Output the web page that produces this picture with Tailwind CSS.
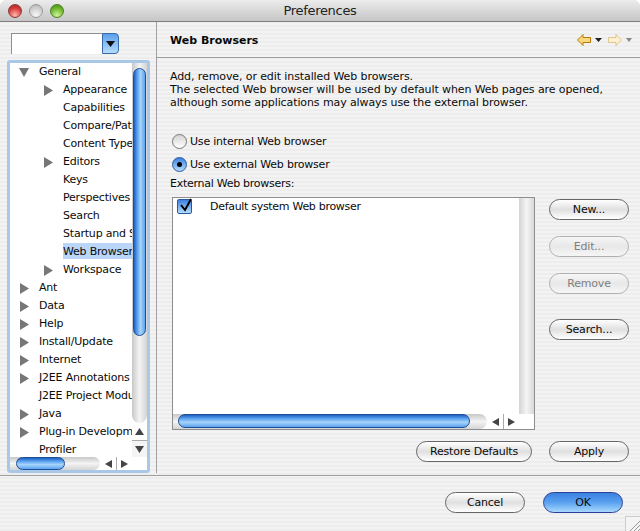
<!DOCTYPE html>
<html><head><meta charset="utf-8"><script src="https://cdn.jsdelivr.net/npm/@tailwindcss/browser@4"></script></head>
<body class="m-0 bg-white">
<div class="w-[640px] h-[531px] overflow-hidden flex flex-col text-[11px] leading-[18px] tracking-[-0.2px] text-[#0a0a0a] font-['DejaVu_Sans',sans-serif] rounded-t-[6px] bg-[repeating-linear-gradient(0deg,#ededed_0,#ededed_2px,#f3f3f3_2px,#f3f3f3_4px)]">
  <!-- title bar -->
  <div class="h-[22px] shrink-0 relative flex items-center justify-center border-b border-[#7f7f7f] bg-gradient-to-b from-[#ececec] to-[#c6c6c6] text-[13px] tracking-[-0.3px] text-[#222]">
    <div class="absolute left-[8px] top-[4px] flex gap-[7px]">
      <span class="w-[14px] h-[14px] rounded-full border border-[#8a3a3a] bg-[radial-gradient(circle_at_50%_85%,#ffb8b0,#d83a3a_60%,#a52020)]"></span>
      <span class="w-[14px] h-[14px] rounded-full border border-[#9a9a9a] bg-[radial-gradient(circle_at_50%_85%,#f8f8f8,#c8c8c8_70%,#aaa)]"></span>
      <span class="w-[14px] h-[14px] rounded-full border border-[#4f7f2a] bg-[radial-gradient(circle_at_50%_85%,#d0f498,#6db52a_60%,#3f8a15)]"></span>
    </div>
    Preferences
  </div>
  <!-- main -->
  <div class="flex flex-1 min-h-0">
    <!-- left pane -->
    <div class="w-[157px] shrink-0 border-r border-[#a0a0a0] flex flex-col mb-[2px]">
      <div class="h-[38px] shrink-0 flex items-start pl-[11px] pt-[11px]">
        <div class="w-[108px] h-[21px] flex">
          <div class="flex-1 bg-white border-t border-l border-[#8e8e8e]"></div>
          <div class="w-[17px] rounded-r-[4px] border border-[#3b6aa8] bg-gradient-to-b from-[#5b9fea] to-[#b5dcfb] flex items-center justify-center">
            <svg width="9" height="6"><path d="M0 0H9L4.500 6Z" fill="#111"/></svg>
          </div>
        </div>
      </div>
      <div class="w-[143px] h-[413px] ml-[7px] relative bg-white border-[3px] border-[#a9c8e8] rounded-[3px] overflow-hidden">
        <div class="absolute inset-0 overflow-hidden whitespace-nowrap">
          <div class="h-[18px] flex items-center"><svg class="ml-[9px] shrink-0" width="10" height="9"><path d="M0 0H10L5 9Z" fill="#777"/></svg><span class="ml-[10px]">General</span></div>
          <div class="h-[18px] flex items-center"><svg class="ml-[34px] shrink-0" width="9" height="11"><path d="M0 0V11L9 5.500Z" fill="#777"/></svg><span class="ml-[10px]">Appearance</span></div>
          <div class="h-[18px] pl-[53px]">Capabilities</div>
          <div class="h-[18px] pl-[53px]">Compare/Patch</div>
          <div class="h-[18px] pl-[53px]">Content Types</div>
          <div class="h-[18px] flex items-center"><svg class="ml-[34px] shrink-0" width="9" height="11"><path d="M0 0V11L9 5.500Z" fill="#777"/></svg><span class="ml-[10px]">Editors</span></div>
          <div class="h-[18px] pl-[53px]">Keys</div>
          <div class="h-[18px] pl-[53px]">Perspectives</div>
          <div class="h-[18px] pl-[53px]">Search</div>
          <div class="h-[18px] pl-[53px]">Startup and Shutdown</div>
          <div class="h-[18px] pl-[53px]"><span class="block w-[70px] h-[16px] leading-[18px] bg-[#b9d5f8]">Web Browser</span></div>
          <div class="h-[18px] flex items-center"><svg class="ml-[34px] shrink-0" width="9" height="11"><path d="M0 0V11L9 5.500Z" fill="#777"/></svg><span class="ml-[10px]">Workspace</span></div>
          <div class="h-[18px] flex items-center"><svg class="ml-[10px] shrink-0" width="9" height="11"><path d="M0 0V11L9 5.500Z" fill="#777"/></svg><span class="ml-[10px]">Ant</span></div>
          <div class="h-[18px] flex items-center"><svg class="ml-[10px] shrink-0" width="9" height="11"><path d="M0 0V11L9 5.500Z" fill="#777"/></svg><span class="ml-[10px]">Data</span></div>
          <div class="h-[18px] flex items-center"><svg class="ml-[10px] shrink-0" width="9" height="11"><path d="M0 0V11L9 5.500Z" fill="#777"/></svg><span class="ml-[10px]">Help</span></div>
          <div class="h-[18px] flex items-center"><svg class="ml-[10px] shrink-0" width="9" height="11"><path d="M0 0V11L9 5.500Z" fill="#777"/></svg><span class="ml-[10px]">Install/Update</span></div>
          <div class="h-[18px] flex items-center"><svg class="ml-[10px] shrink-0" width="9" height="11"><path d="M0 0V11L9 5.500Z" fill="#777"/></svg><span class="ml-[10px]">Internet</span></div>
          <div class="h-[18px] flex items-center"><svg class="ml-[10px] shrink-0" width="9" height="11"><path d="M0 0V11L9 5.500Z" fill="#777"/></svg><span class="ml-[10px]">J2EE Annotations</span></div>
          <div class="h-[18px] pl-[29px]">J2EE Project Modules</div>
          <div class="h-[18px] flex items-center"><svg class="ml-[10px] shrink-0" width="9" height="11"><path d="M0 0V11L9 5.500Z" fill="#777"/></svg><span class="ml-[10px]">Java</span></div>
          <div class="h-[18px] flex items-center"><svg class="ml-[10px] shrink-0" width="9" height="11"><path d="M0 0V11L9 5.500Z" fill="#777"/></svg><span class="ml-[10px]">Plug-in Development</span></div>
          <div class="h-[18px] pl-[29px]">Profiler</div>
        </div>
        <!-- vertical scrollbar -->
        <div class="absolute right-0 top-0 w-[15px] bottom-[13px] bg-white flex flex-col">
          <div class="flex-1 min-h-0 rounded-b-[8px] bg-gradient-to-r from-[#c8c8c8] via-[#f4f4f4] to-[#d4d4d4] pt-[5px] px-[1px]">
            <div class="h-[268px] rounded-full border border-[#1f4f96] bg-[linear-gradient(90deg,#1e5fc0,#5aa2f0_30%,#a8d4fa_60%,#5aa2f0)]"></div>
          </div>
          <div class="h-[17px] shrink-0 flex items-center justify-center"><svg width="9" height="7"><path d="M4.500 0L9 7H0Z" fill="#444"/></svg></div>
          <div class="h-[17px] shrink-0 border-t border-[#aaa] flex items-center justify-center bg-[#f4f4f4]"><svg width="9" height="7"><path d="M0 0H9L4.500 7Z" fill="#444"/></svg></div>
        </div>
        <!-- horizontal scrollbar -->
        <div class="absolute left-0 bottom-0 right-[15px] h-[13px] bg-white flex items-center">
          <div class="flex-1 h-full rounded-r-[7px] bg-gradient-to-b from-[#c8c8c8] via-[#f4f4f4] to-[#d4d4d4] pl-[6px]">
            <div class="w-[49px] h-[13px] rounded-full border border-[#1f4f96] bg-[linear-gradient(180deg,#1e5fc0,#5aa2f0_30%,#a8d4fa_60%,#5aa2f0)]"></div>
          </div>
          <div class="shrink-0 w-[16px] h-full flex items-center justify-center"><svg width="7" height="8"><path d="M7 0V8L0 4Z" fill="#444"/></svg></div>
          <div class="shrink-0 w-[16px] h-full border-l border-[#aaa] flex items-center justify-center"><svg width="7" height="8"><path d="M0 0V8L7 4Z" fill="#444"/></svg></div>
        </div>
      </div>
    </div>
    <!-- right pane -->
    <div class="flex-1 min-w-0 flex flex-col">
      <div class="h-[36px] shrink-0 flex items-center pl-[13px] pr-[8px] border-b border-[#a0a0a0]">
        <span class="font-bold text-[11px] tracking-[0px] mt-[2px]">Web Browsers</span>
        <div class="ml-auto flex items-center">
          <svg width="14" height="12" viewBox="0 0 14 12"><path d="M.5 6L6 .5V3.500H13.500V8.500H6V11.500Z" fill="#f8d878" stroke="#b87a10"/></svg>
          <svg class="ml-[4px]" width="7" height="4"><path d="M0 0H7L3.500 4Z" fill="#222"/></svg>
          <svg class="ml-[6px]" width="14" height="12" viewBox="0 0 14 12"><path d="M13.500 6L8 .5V3.500H.5V8.500H8V11.500Z" fill="#fbf0cf" stroke="#dfc490"/></svg>
          <svg class="ml-[4px]" width="6" height="4"><path d="M0 0H6L3 4Z" fill="#888"/></svg>
        </div>
      </div>
      <div class="flex-1 min-h-0 flex flex-col pl-[13px]">
        <p class="mt-[12px] leading-[13px] tracking-[-0.1px]">Add, remove, or edit installed Web browsers.<br>The selected Web browser will be used by default when Web pages are opened,<br>although some applications may always use the external browser.</p>
        <div class="mt-[21px] ml-[2px] h-[23px] flex items-center gap-[3px]"><span class="w-[15px] h-[15px] rounded-full border border-[#777] bg-gradient-to-b from-[#d4d4d4] to-white"></span>Use internal Web browser</div>
        <div class="ml-[2px] h-[23px] flex items-center gap-[3px]"><span class="w-[15px] h-[15px] rounded-full border border-[#2a5a9a] bg-gradient-to-b from-[#3a80e0] to-[#b5dcfb] flex items-center justify-center"><span class="w-[5px] h-[5px] rounded-full bg-black"></span></span>Use external Web browser</div>
        <div class="-mt-[1px] h-[18px] tracking-[-0.27px]">External Web browsers:</div>
        <div class="flex mt-[4px] ml-[2px]">
          <div class="w-[363px] h-[233px] border border-[#8e8e8e] bg-white flex flex-col relative">
            <div class="flex-1 flex min-h-0">
              <div class="flex-1 flex items-start pl-[4px]">
                <span class="w-[15px] h-[15px] mt-[1px] rounded-[2px] border border-[#2a5a9a] bg-gradient-to-b from-[#3a80e0] to-[#b5dcfb] relative"><svg class="absolute left-[1px] top-[-3px]" width="14" height="16"><path d="M2 8L6 13L12 2" fill="none" stroke="#000" stroke-width="2"/></svg></span>
                <span class="ml-[18px] tracking-[-0.3px]">Default system Web browser</span>
              </div>
              <div class="w-[15px] bg-gradient-to-r from-[#d4d4d4] via-[#f4f4f4] to-[#d8d8d8]"></div>
            </div>
            <div class="h-[15px] shrink-0 mr-[15px] flex items-center">
              <div class="flex-1 h-full rounded-r-[8px] bg-gradient-to-b from-[#c8c8c8] via-[#f4f4f4] to-[#d4d4d4] pl-[5px]">
                <div class="w-[292px] h-[14px] rounded-full border border-[#1f4f96] bg-[linear-gradient(180deg,#1e5fc0,#5aa2f0_30%,#a8d4fa_60%,#5aa2f0)]"></div>
              </div>
              <div class="shrink-0 w-[16px] h-full flex items-center justify-center"><svg width="7" height="8"><path d="M7 0V8L0 4Z" fill="#444"/></svg></div>
              <div class="shrink-0 w-[16px] h-full border-l border-[#aaa] flex items-center justify-center"><svg width="7" height="8"><path d="M0 0V8L7 4Z" fill="#444"/></svg></div>
            </div>
          </div>
          <div class="ml-[14px] w-[80px] flex flex-col">
            <div class="mt-[2px] h-[21px] rounded-full border border-[#666] bg-gradient-to-b from-white via-[#e0e0e0] to-white flex items-center justify-center">New...</div>
            <div class="mt-[16px] h-[21px] rounded-full border border-[#b0b0b0] bg-gradient-to-b from-[#f6f6f6] via-[#e8e8e8] to-[#f6f6f6] flex items-center justify-center text-[#7f7f7f]">Edit...</div>
            <div class="mt-[16px] h-[21px] rounded-full border border-[#b0b0b0] bg-gradient-to-b from-[#f6f6f6] via-[#e8e8e8] to-[#f6f6f6] flex items-center justify-center text-[#7f7f7f]">Remove</div>
            <div class="mt-[25px] h-[21px] rounded-full border border-[#666] bg-gradient-to-b from-white via-[#e0e0e0] to-white flex items-center justify-center">Search...</div>
          </div>
        </div>
        <div class="mt-[11px] flex justify-end pr-[11px] gap-[17px]">
          <div class="w-[116px] h-[21px] rounded-full border border-[#666] bg-gradient-to-b from-white via-[#e0e0e0] to-white flex items-center justify-center">Restore Defaults</div>
          <div class="w-[80px] h-[21px] rounded-full border border-[#666] bg-gradient-to-b from-white via-[#e0e0e0] to-white flex items-center justify-center">Apply</div>
        </div>
      </div>
    </div>
  </div>
  <!-- bottom bar -->
  <div class="h-[56px] shrink-0 border-t border-[#a0a0a0] relative flex items-start justify-end pt-[16px] pr-[17px] gap-[18px]">
    <div class="w-[80px] h-[21px] rounded-full border border-[#666] bg-gradient-to-b from-white via-[#e0e0e0] to-white flex items-center justify-center">Cancel</div>
    <div class="w-[80px] h-[21px] rounded-full border border-[#2a3f9a] bg-gradient-to-b from-[#3a80e0] via-[#5aa2f0] to-[#a8d8fb] flex items-center justify-center">OK</div>
    <svg class="absolute right-0 bottom-0 bg-[#f4f4f4] border-l border-t border-[#ccc]" width="15" height="15"><path d="M3 15L15 3M7 15L15 7M11 15L15 11" stroke="#999"/></svg>
  </div>
</div>
</body></html>
